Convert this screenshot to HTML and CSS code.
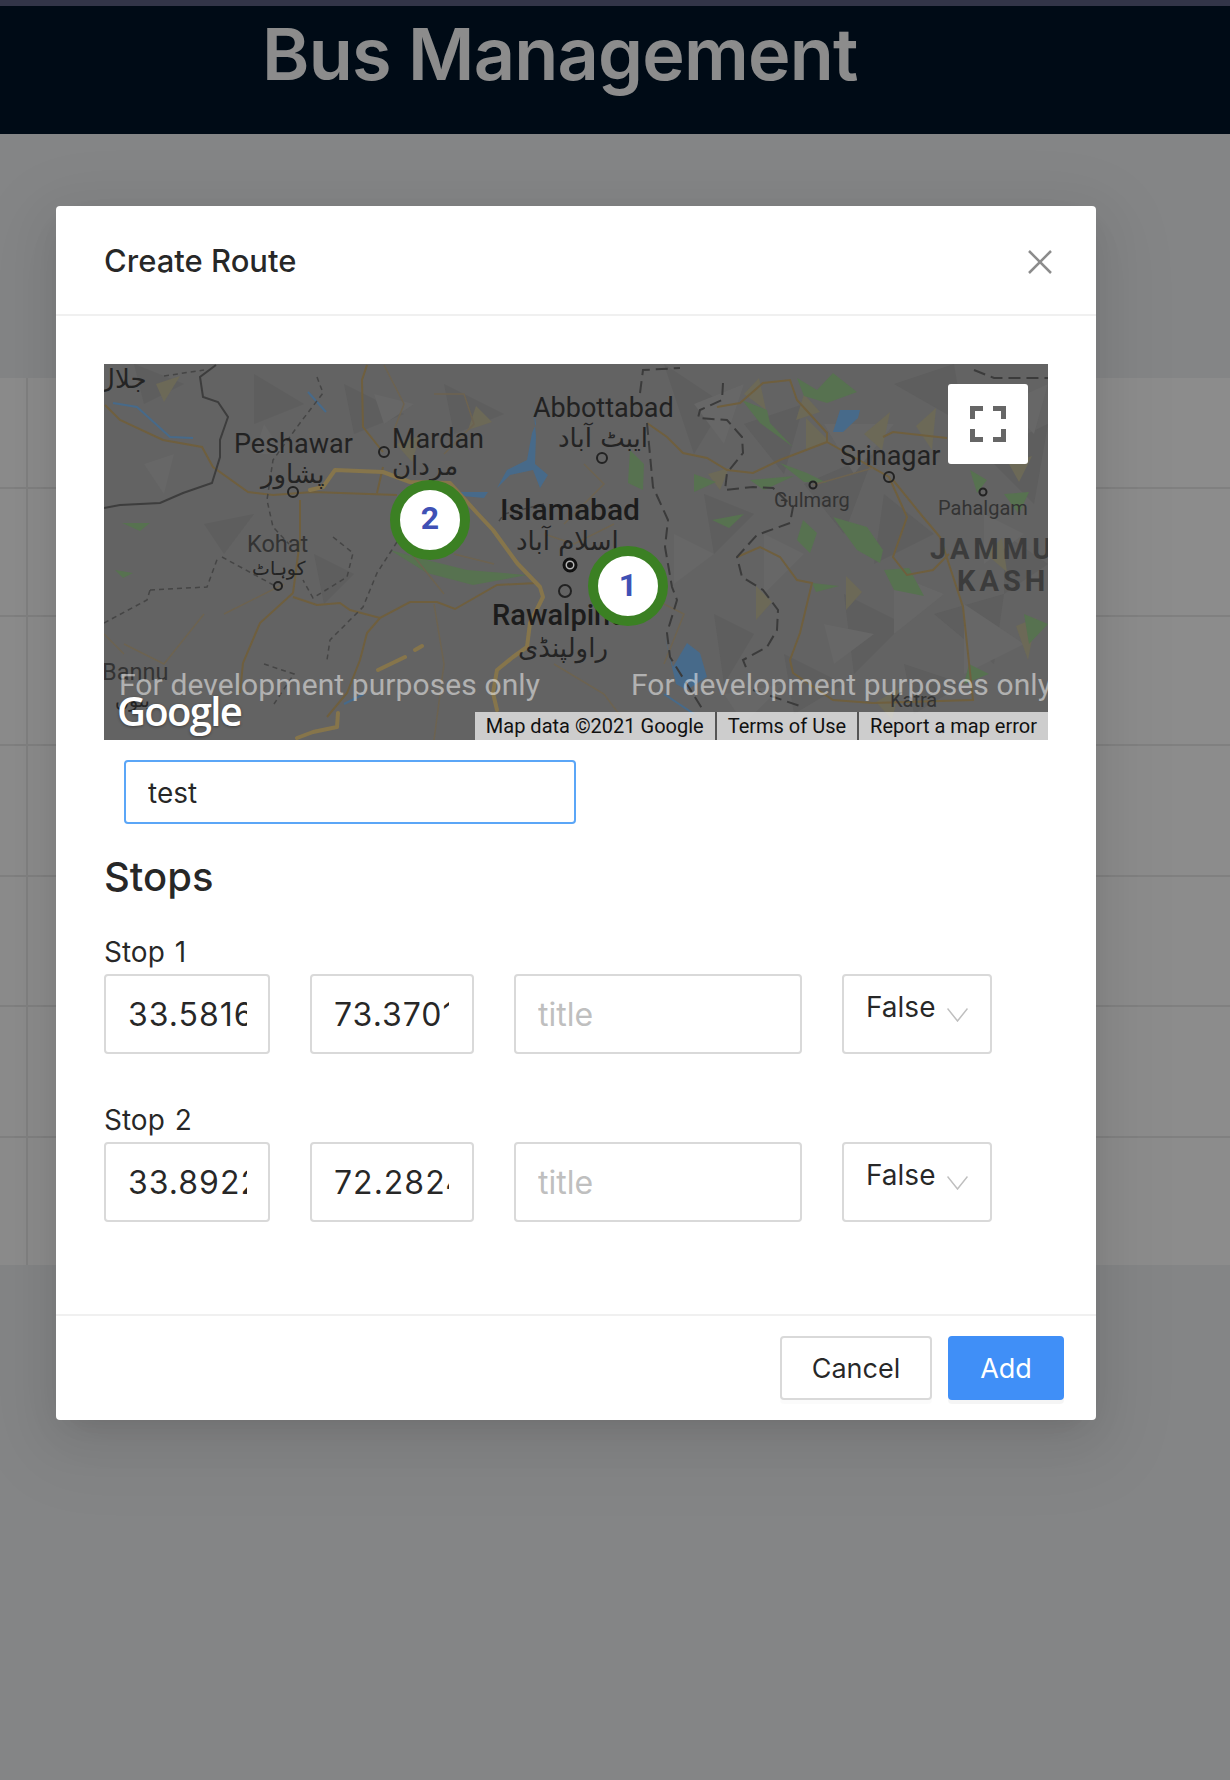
FILE: index.html
```html
<!DOCTYPE html>
<html>

<head>
    <meta charset="utf-8">
    <title>Bus Management</title>
    <meta name="viewport" content="width=device-width, initial-scale=1.0">
    <link rel="stylesheet" href="styles.css">
</head>

<body>
    <div class="topStripe"></div>
    <header class="pageHeader">
        <h1>Bus Management</h1>
    </header>

    <!-- table behind the modal, only the grid lines show through -->
    <div class="routeTable">
        <div class="tableRow rowHead"><div class="firstCell"></div></div>
        <div class="tableRow row128"><div class="firstCell"></div></div>
        <div class="tableRow row129"><div class="firstCell"></div></div>
        <div class="tableRow row131"><div class="firstCell"></div></div>
        <div class="tableRow row130"><div class="firstCell"></div></div>
        <div class="tableRow row131"><div class="firstCell"></div></div>
        <div class="tableRow rowLast"><div class="firstCell"></div></div>
    </div>

    <div class="modalMask"></div>

    <div class="modalWrap">
        <div class="modal">
            <div class="modalHeader">
                <div class="modalTitle">Create Route</div>
                <svg class="closeIcon" viewBox="0 0 24 24"><path d="M1 1L23 23M23 1L1 23"/></svg>
            </div>

            <div class="modalBody">
                <div class="map">
                    <svg class="mapCanvas" viewBox="0 0 944 376">
                        <rect class="land" width="944" height="376"/>

                        <!-- terrain -->
                        <path class="hillDark" d="M560 0L620 40L590 90ZM640 60L700 40L680 110ZM700 120L770 90L740 170ZM790 20L850 0L860 60ZM880 90L944 60L930 140ZM780 130L830 170L770 200ZM600 130L650 150L610 190ZM830 250L900 230L890 300ZM740 230L800 260L750 310ZM900 170L944 200L900 230ZM610 250L650 270L620 320ZM680 290L740 320L690 350ZM800 300L860 320L810 350ZM30 0L80 20L40 40ZM150 10L200 40L150 60ZM240 20L300 50L250 70ZM340 20L400 50L350 70ZM100 160L150 150L120 190ZM210 190L250 210L220 240ZM850 20L900 40L860 70Z"/>
                        <path class="hillLight" d="M590 40L640 20L620 80ZM720 60L790 60L750 110ZM660 170L700 190L660 230ZM790 210L840 230L790 270ZM880 150L920 170L880 200ZM720 260L770 270L730 300ZM860 240L920 280L860 310ZM620 330L680 320L640 360ZM900 40L944 20L930 70ZM570 170L610 190L570 220ZM40 100L70 90L60 130ZM270 30L310 40L280 60ZM160 60L180 90L150 90Z"/>
                        <path class="hillTan" d="M604 110L625 104L616 126ZM640 30L655 14L662 46ZM700 30L716 48L692 56ZM760 70L786 48L778 86ZM812 62L832 44L828 86ZM905 100L928 92L915 118ZM742 212L758 228L742 246ZM882 190L898 174L903 208ZM912 262L932 254L924 296ZM652 222L668 238L652 256ZM772 338L796 324L788 356ZM702 54L726 78L702 86ZM372 42L388 58L364 66ZM292 80L316 72L308 98ZM52 20L76 12L60 38Z"/>
                        <path class="green" d="M638 36L663 46L666 59L689 83L656 59ZM693 14L713 26L729 9L753 28L723 39L700 32ZM676 99L703 109L723 119L700 118ZM729 153L763 163L779 186L776 199L753 186ZM699 156L713 169L706 189L693 176ZM866 106L883 116L873 129ZM526 86L540 100L539 126L524 119ZM18 159L46 159L36 167ZM11 206L29 209L19 214ZM286 186L323 196L363 206L423 211L369 221L323 209ZM646 116L690 112L660 126ZM780 206L805 204L820 232L790 226ZM708 219L735 222L712 228ZM920 250L944 260L925 280ZM865 300L885 310L860 320ZM608 156L640 150L625 164ZM590 110L612 118L590 128ZM900 130L925 128L915 150Z"/>

                        <!-- water -->
                        <path class="water" d="M429 39L432 60L428 69L423 96L403 106L393 124L406 111L429 106L436 124L444 111L431 100L432 72ZM356 128L384 128L380 134L358 132ZM561 273L569 303L583 279L596 289L603 313L583 326L572 320ZM736 46L756 46L754 54L739 68L729 68Z"/>
                        <path class="river" d="M9 39L33 43L66 73L89 74M400 300L393 306M560 330L590 350M204 28L222 48M260 330L240 340"/>

                        <!-- roads -->
                        <path class="road" d="M1 41L16 56L59 76L98 83L109 103L144 128L169 131L209 128L293 131M279 103L273 129M279 88L259 63L258 16L263 1M196 136L196 176M189 233L213 241L236 239L246 246L276 254L306 238L333 238L351 245L393 221L433 219M276 254L263 269L256 296L243 329L223 353M189 229L156 259L139 299L136 329M189 229L196 176M613 43L636 39L659 19L686 16L693 36L723 69L723 78L676 96L649 109L623 106L603 94L579 89L563 73L543 59M723 78L785 113L803 153L789 193L803 211L829 206L845 190M779 73L789 68L843 74M633 193L656 183L676 193L693 216L708 219L696 269L686 296L689 309L729 336L769 339L869 336L859 243L836 173L819 153L789 116"/>
                        <path class="roadThin" d="M280 1L300 40L290 66M330 30L360 30L370 60L340 90M440 170L470 180L510 160M480 100L500 120L460 160M560 300L580 250L540 230M709 121L769 104M450 300L500 330L530 370M330 240L340 300L330 376M100 250L60 300L20 280M0 270L20 290M300 180L340 230M350 190L390 200M120 250L180 220"/>
                        <path class="highway" d="M206 126L219 123L231 106L279 108L306 118L346 119L373 149L389 166L413 199L436 223L439 233L426 259L423 283L409 293L393 306L389 329L393 346M274 306L301 293M311 286L318 282M193 374L209 368L233 363L234 349"/>

                        <!-- borders -->
                        <path class="border" d="M112 1L96 13L99 33L114 38L124 53L116 76L116 93L108 119L79 129L56 139L16 141L0 144"/>
                        <path class="province" d="M60 12L100 6M213 13L219 29L196 59L169 96L163 136L169 163L185 180M229 173L249 189L243 213L209 234L199 216M293 178L273 209L259 243L226 276L223 296M118 193L173 223M46 226L103 223L114 193M0 259L43 236L46 226M160 300L190 310L170 340M440 140L400 150L393 160"/>
                        <path class="lineControl" d="M536 29L539 6L576 4M619 19L618 36L596 46L594 54L623 56L638 73L639 89L623 109L621 126L649 123L669 124L689 143L686 159L653 171L633 193L638 213L659 226L674 246L673 266L663 283L639 296L643 306M543 59L549 123L564 156L561 183L568 223L573 236L563 269L566 293L599 346M649 326L699 343M870 6L890 14L944 14"/>

                        <!-- places -->
                        <circle class="dot" cx="280" cy="88" r="5"/>
                        <circle class="dot" cx="189" cy="128" r="5"/>
                        <circle class="dot" cx="174" cy="222" r="4"/>
                        <circle class="dot" cx="498" cy="94" r="5"/>
                        <circle class="dot" cx="461" cy="227" r="6"/>
                        <circle class="dot" cx="785" cy="113" r="5"/>
                        <circle class="dot" cx="709" cy="121" r="3.5"/>
                        <circle class="dot" cx="879" cy="128" r="3.5"/>
                        <circle class="dotCapital" cx="466" cy="201" r="6"/>
                        <circle class="dotCenter" cx="466" cy="201" r="3"/>

                        <text class="label" x="130" y="89">Peshawar</text>
                        <text class="label" x="288" y="84">Mardan</text>
                        <text class="label" x="429" y="53">Abbottabad</text>
                        <text class="label" x="736" y="101">Srinagar</text>
                        <text class="label labelCapital" x="396" y="156">Islamabad</text>
                        <text class="label labelCity" x="388" y="261">Rawalpindi</text>
                        <text class="labelSmall" x="143" y="188">Kohat</text>
                        <text class="labelSmall" x="-2" y="316">Bannu</text>
                        <text class="labelTiny" x="670" y="143">Gulmarg</text>
                        <text class="labelTiny" x="834" y="151">Pahalgam</text>
                        <text class="labelTiny" x="786" y="343">Katra</text>
                        <text class="region" x="826" y="195">JAMMU</text>
                        <text class="region" x="853" y="227">KASHMIR</text>

                        <text class="urdu" x="-8" y="24">جلال</text>
                        <text class="urdu" x="157" y="119">پشاور</text>
                        <text class="urdu" x="288" y="111">مردان</text>
                        <text class="urdu" x="454" y="83">ایبٹ آباد</text>
                        <text class="urdu" x="412" y="186">اسلام آباد</text>
                        <text class="urdu" x="414" y="293">راولپنڈی</text>
                        <text class="urdu urduSmall" x="148" y="211">کوہاٹ</text>
                        <text class="urdu urduSmall" x="11" y="343">بنوں</text>

                        <!-- stop markers -->
                        <circle class="markerRing" cx="326" cy="156" r="35"/>
                        <text class="markerNumber" x="326" y="165">2</text>
                        <circle class="markerRing" cx="524" cy="222" r="35"/>
                        <text class="markerNumber" x="524" y="232">1</text>
                    </svg>

                    <div class="devNote noteLeft">For development purposes only</div>
                    <div class="devNote noteRight">For development purposes only</div>
                    <div class="googleLogo">Google</div>

                    <button class="fullscreenBtn">
                        <svg viewBox="0 0 36 36"><path d="M2.5 13V2.500H13M23 2.500H33.500V13M33.500 23V33.500H23M13 33.500H2.500V23"/></svg>
                    </button>

                    <div class="mapCredits">
                        <span class="credit">Map data ©2021 Google</span>
                        <span class="credit">Terms of Use</span>
                        <span class="credit">Report a map error</span>
                    </div>
                </div>

                <input class="routeName" type="text" value="test">

                <h4 class="stopsTitle">Stops</h4>

                <div class="stop">
                    <div class="stopLabel">Stop 1</div>
                    <div class="stopFields">
                        <input class="field fieldLat" type="text" value="33.58162345">
                        <input class="field fieldLng" type="text" value="73.37012345">
                        <input class="field fieldTitle" type="text" placeholder="title">
                        <div class="selectBox">
                            <span>False</span>
                            <svg class="selectArrow" viewBox="0 0 21 14"><path d="M0.500 0.500L10.500 13L20.500 0.500"/></svg>
                        </div>
                    </div>
                </div>

                <div class="stop">
                    <div class="stopLabel">Stop 2</div>
                    <div class="stopFields">
                        <input class="field fieldLat" type="text" value="33.89223456">
                        <input class="field fieldLng" type="text" value="72.28243456">
                        <input class="field fieldTitle" type="text" placeholder="title">
                        <div class="selectBox">
                            <span>False</span>
                            <svg class="selectArrow" viewBox="0 0 21 14"><path d="M0.500 0.500L10.500 13L20.500 0.500"/></svg>
                        </div>
                    </div>
                </div>
            </div>

            <div class="modalFooter">
                <button class="btn btnCancel">Cancel</button>
                <button class="btn btnAdd">Add</button>
            </div>
        </div>
    </div>
</body>
</html>
```

FILE: styles.css
```css
html, body {
    margin: 0;
    height: 1780px;
    overflow: hidden;
}

body {
    position: relative;
    background-color: #f0f2f5;
    font-family: "Inter", "Liberation Sans", sans-serif;
    color: rgba(0, 0, 0, 0.85);
}

.topStripe {
    height: 6px;
    background-color: #5b6283;
}

.pageHeader {
    height: 128px;
    background-color: #001529;
}

.pageHeader h1 {
    margin: 0;
    padding-left: 262px;
    font-size: 72px;
    font-weight: 600;
    letter-spacing: -0.8px;
    line-height: 95px;
    color: #fff;
}

/* background table */
.routeTable {
    margin-top: 244px;
    background-color: #fff;
}

.tableRow {
    box-sizing: border-box;
    border-bottom: 2px solid #e9e9e9;
}

.rowHead { height: 111px; }
.row128 { height: 128px; }
.row129 { height: 129px; }
.row130 { height: 130px; }
.row131 { height: 131px; }
.rowLast { height: 127px; border-bottom: 0; }

.firstCell {
    box-sizing: border-box;
    width: 28px;
    height: 100%;
    border-right: 2px solid #e9e9e9;
}

.modalMask {
    position: absolute;
    top: 0;
    right: 0;
    bottom: 0;
    left: 0;
    background-color: rgba(0, 0, 0, 0.45);
}

.modalWrap {
    position: absolute;
    top: 206px;
    left: 56px;
}

.modal {
    display: flex;
    flex-direction: column;
    box-sizing: border-box;
    width: 1040px;
    height: 1214px;
    background-color: #fff;
    border-radius: 4px;
    box-shadow: 0 10px 28px -14px rgba(0, 0, 0, 0.1), 0 16px 50px rgba(0, 0, 0, 0.09), 0 20px 84px 28px rgba(0, 0, 0, 0.03);
}

.modalHeader {
    display: flex;
    align-items: center;
    justify-content: space-between;
    box-sizing: border-box;
    height: 110px;
    padding: 0 44px 0 48px;
    border-bottom: 2px solid #f0f0f0;
}

.modalTitle {
    font-size: 31px;
    font-weight: 500;
}

.closeIcon {
    width: 24px;
    height: 24px;
    margin-top: 4px;
}

.closeIcon path {
    fill: none;
    stroke: #8c8c8c;
    stroke-width: 2.5;
}

.modalBody {
    flex: 1;
    padding: 48px 48px 0;
}

/* map */
.map {
    position: relative;
    width: 944px;
    height: 376px;
    overflow: hidden;
}

.mapCanvas {
    display: block;
    width: 944px;
    height: 376px;
}

.land { fill: #636363; }
.hillDark { fill: #5e5e5e; }
.hillLight { fill: #676767; }
.hillTan { fill: #6c6957; }
.green { fill: #577250; }
.water { fill: #476a8a; }

.river {
    fill: none;
    stroke: #476a8a;
    stroke-width: 2;
}

.road {
    fill: none;
    stroke: #6f5f3e;
    stroke-width: 2;
}

.roadThin {
    fill: none;
    stroke: #6d6350;
    stroke-width: 1.5;
}

.highway {
    fill: none;
    stroke: #86754b;
    stroke-width: 4;
    stroke-linecap: round;
    stroke-linejoin: round;
}

.border {
    fill: none;
    stroke: #3d3d3d;
    stroke-width: 2;
}

.province {
    fill: none;
    stroke: #454545;
    stroke-width: 1.5;
    stroke-dasharray: 5 4;
}

.lineControl {
    fill: none;
    stroke: #3b3b3b;
    stroke-width: 2;
    stroke-dasharray: 12 6;
}

.dot {
    fill: none;
    stroke: #222;
    stroke-width: 2;
}

.dotCapital {
    fill: #b5b5b5;
    stroke: #111;
    stroke-width: 3;
}

.dotCenter { fill: #111; }

.label {
    font-family: "Roboto", "Liberation Sans", sans-serif;
    font-size: 27px;
    fill: #222;
}

.labelCity {
    font-size: 29px;
    font-weight: 500;
    fill: #1c1c1c;
}

.labelCapital {
    font-size: 30px;
    font-weight: 500;
    fill: #1c1c1c;
}

.labelSmall {
    font-family: "Roboto", "Liberation Sans", sans-serif;
    font-size: 23.500px;
    fill: #333;
}

.labelTiny {
    font-family: "Roboto", "Liberation Sans", sans-serif;
    font-size: 20px;
    fill: #333;
}

.region {
    font-family: "Roboto", "Liberation Sans", sans-serif;
    font-size: 29px;
    font-weight: 700;
    letter-spacing: 4px;
    fill: #3c3c3c;
}

.urdu {
    font-family: "DejaVu Sans", sans-serif;
    font-size: 26px;
    fill: #242424;
}

.urduSmall {
    font-size: 19px;
}

.markerRing {
    fill: #fff;
    stroke: #3b8023;
    stroke-width: 10;
}

.markerNumber {
    font-family: "Roboto", "Liberation Sans", sans-serif;
    font-size: 32px;
    font-weight: 700;
    text-anchor: middle;
    fill: #3f51b5;
}

.devNote {
    position: absolute;
    top: 301px;
    font-family: "Roboto", "Liberation Sans", sans-serif;
    font-size: 30px;
    letter-spacing: 0.1px;
    line-height: 40px;
    white-space: nowrap;
    color: rgba(255, 255, 255, 0.5);
}

.noteLeft { left: 15px; }
.noteRight { left: 527px; }

.googleLogo {
    position: absolute;
    left: 13px;
    top: 320px;
    font-family: "Open Sans", sans-serif;
    font-size: 40px;
    font-weight: 600;
    line-height: 54px;
    letter-spacing: -1.700px;
    color: #fff;
    text-shadow: 0 1px 3px rgba(0, 0, 0, 0.4);
}

.fullscreenBtn {
    position: absolute;
    top: 20px;
    right: 20px;
    display: flex;
    align-items: center;
    justify-content: center;
    width: 80px;
    height: 80px;
    padding: 0;
    border: 0;
    border-radius: 3px;
    background-color: #fff;
}

.fullscreenBtn svg {
    width: 36px;
    height: 36px;
}

.fullscreenBtn path {
    fill: none;
    stroke: #666;
    stroke-width: 5;
}

.mapCredits {
    position: absolute;
    right: 0;
    bottom: 0;
    display: flex;
    height: 28px;
    background-color: rgba(255, 255, 255, 0.68);
    font-family: "Roboto", "Liberation Sans", sans-serif;
    font-size: 20px;
    line-height: 28px;
    color: #111;
}

.credit {
    padding: 0 11px;
    border-left: 2px solid #555;
}

.credit:first-child { border-left: 0; }

/* form */
input {
    font-family: inherit;
    color: inherit;
}

.routeName {
    display: block;
    box-sizing: border-box;
    width: 452px;
    height: 64px;
    margin: 20px 0 0 20px;
    padding: 2px 22px 0;
    border: 2px solid #5ba6f7;
    border-radius: 4px;
    font-size: 28px;
    outline: none;
}

.stopsTitle {
    margin: 25px 0 0;
    font-size: 40px;
    font-weight: 500;
    line-height: 56px;
}

.stop {
    margin-top: 27px;
}

.stop + .stop {
    margin-top: 46px;
}

.stopLabel {
    font-size: 28px;
    line-height: 40px;
    word-spacing: 2px;
}

.stopFields {
    display: flex;
    gap: 40px;
    margin-top: 2px;
}

.field {
    box-sizing: border-box;
    height: 80px;
    padding: 1px 23px 0 22px;
    border: 2px solid #d9d9d9;
    border-radius: 4px;
    font-size: 32px;
    outline: none;
}

.field::placeholder {
    color: #bfbfbf;
}

.fieldLat, .fieldLng {
    letter-spacing: 1px;
}

.fieldLat {
    width: 166px;
    padding-right: 21px;
}

.fieldLng { width: 164px; }
.fieldTitle { width: 288px; }

.selectBox {
    position: relative;
    box-sizing: border-box;
    width: 150px;
    height: 80px;
    padding: 11px 0 0 22px;
    border: 2px solid #d9d9d9;
    border-radius: 4px;
    font-size: 28px;
    line-height: 40px;
}

.selectArrow {
    position: absolute;
    top: 32px;
    right: 22px;
    width: 21px;
    height: 14px;
}

.selectArrow path {
    fill: none;
    stroke: #bfbfbf;
    stroke-width: 1.5;
}

.modalFooter {
    display: flex;
    justify-content: flex-end;
    gap: 16px;
    padding: 20px 32px;
    border-top: 2px solid #f0f0f0;
}

.btn {
    box-sizing: border-box;
    height: 64px;
    border-radius: 4px;
    font-family: inherit;
    font-size: 27px;
}

.btnCancel {
    width: 152px;
    border: 2px solid #d9d9d9;
    background-color: #fff;
    color: rgba(0, 0, 0, 0.85);
    box-shadow: 0 4px 0 rgba(0, 0, 0, 0.015);
}

.btnAdd {
    width: 116px;
    border: 2px solid #408ff7;
    background-color: #408ff7;
    color: #fff;
    box-shadow: 0 4px 0 rgba(0, 0, 0, 0.04);
}
```
